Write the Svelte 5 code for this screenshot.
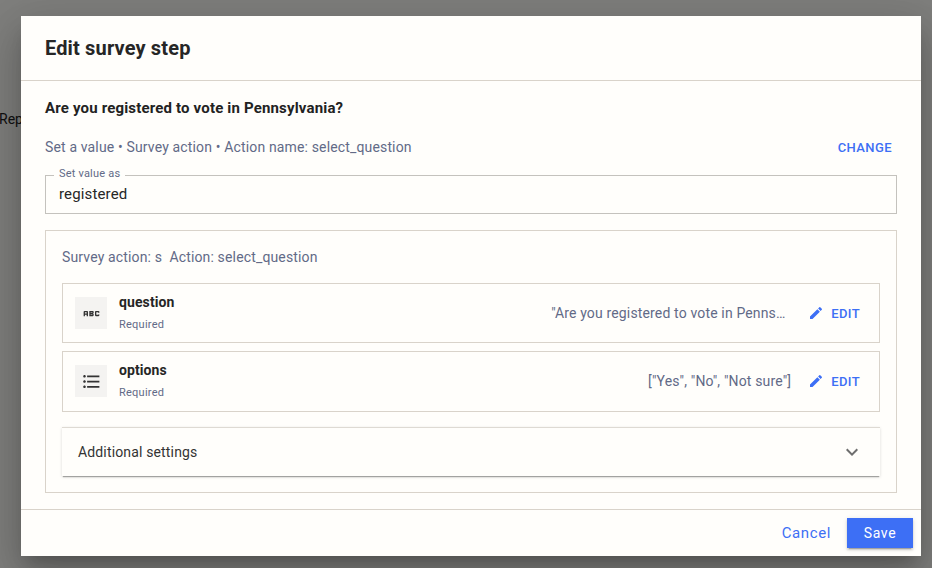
<script>
	let value = $state('registered');

	const params = [
		{ name: 'question', icon: 'abc', preview: '"Are you registered to vote in Pennsylvania?"' },
		{ name: 'options', icon: 'list', preview: '["Yes", "No", "Not sure"]' }
	];
</script>

<div class="page">
	<p class="behind">Rep</p>

	<div class="backdrop">
		<div class="dialog">
			<h2 class="title">Edit survey step</h2>

			<div class="content">
				<p class="question">Are you registered to vote in Pennsylvania?</p>

				<div class="meta-row">
					<span class="meta">Set a value • Survey action • Action name: select_question</span>
					<button class="text-btn change">CHANGE</button>
				</div>

				<fieldset class="field">
					<legend>Set value as</legend>
					<input bind:value />
				</fieldset>

				<div class="action-box">
					<div class="action-label">Survey action: s&nbsp;&nbsp;Action: select_question</div>

					{#each params as p}
						<div class="param {p.icon}">
							<div class="thumb">
								{#if p.icon === 'abc'}
									<svg width="21" height="21" viewBox="0 0 24 24" fill="#333">
										<path d="M21 11h-1.500v-.5h-2v3h2V13H21v1c0 .55-.45 1-1 1h-3c-.55 0-1-.45-1-1v-4c0-.55.45-1 1-1h3c.55 0 1 .45 1 1v1zM8 10v5H6.500v-1.500h-2V15H3v-5c0-.55.45-1 1-1h3c.55 0 1 .45 1 1zm-1.500.5h-2V12h2v-1.500zm7 1.500c.55 0 1 .45 1 1v1c0 .55-.45 1-1 1h-4V9h4c.55 0 1 .45 1 1v1c0 .55-.45 1-1 1zM11 10.500v.75h2v-.75h-2zm2 2.250h-2v.75h2v-.75z" />
									</svg>
								{:else}
									<svg width="21" height="21" viewBox="0 0 24 24" fill="#333">
										<path d="M4 10.500c-.83 0-1.500.67-1.500 1.500s.67 1.500 1.500 1.500 1.500-.67 1.500-1.500-.67-1.500-1.500-1.500zm0-6c-.83 0-1.500.67-1.500 1.500S3.170 7.500 4 7.500 5.500 6.830 5.500 6 4.830 4.500 4 4.500zm0 12c-.83 0-1.500.68-1.500 1.500s.68 1.500 1.500 1.500 1.500-.68 1.500-1.500-.67-1.500-1.500-1.500zM7 19h14v-2H7v2zm0-6h14v-2H7v2zm0-8v2h14V5H7z" />
									</svg>
								{/if}
							</div>
							<div class="param-text">
								<div class="param-name">{p.name}</div>
								<div class="param-req">Required</div>
							</div>
							<div class="preview">{p.preview}</div>
							<button class="text-btn edit">
								<svg width="16" height="16" viewBox="0 0 24 24" fill="#3d6ff5">
									<path d="M3 17.250V21h3.750L17.810 9.940l-3.750-3.750L3 17.250zM20.710 7.040a1 1 0 0 0 0-1.410l-2.340-2.340a1 1 0 0 0-1.410 0l-1.830 1.830 3.750 3.750 1.830-1.830z" />
								</svg>
								EDIT
							</button>
						</div>
					{/each}

					<div class="accordion">
						<span>Additional settings</span>
						<svg width="24" height="24" viewBox="0 0 24 24" fill="#6e6e6e">
							<path d="M16.590 8.590 12 13.170 7.410 8.590 6 10l6 6 6-6z" />
						</svg>
					</div>
				</div>
			</div>

			<div class="actions">
				<button class="text-btn cancel">Cancel</button>
				<button class="save">Save</button>
			</div>
		</div>
	</div>
</div>

<style>
	:global(body) {
		margin: 0;
		background: #fffefb;
	}

	.page {
		width: 932px;
		height: 568px;
		overflow: hidden;
		position: relative;
		font-family: Roboto, sans-serif;
		color: #222;
	}

	.behind {
		margin: 0;
		padding-top: 110px;
		font-size: 14px;
		line-height: 18px;
		margin-left: -1px;
	}

	.backdrop {
		position: absolute;
		inset: 0;
		background: rgba(0, 0, 0, 0.5);
		display: flex;
		padding: 16px 0 0 21px;
	}

	.dialog {
		width: 900px;
		height: 540px;
		background: #fffefb;
		display: flex;
		flex-direction: column;
		box-shadow: 0 11px 15px -7px rgba(0, 0, 0, 0.2), 0 24px 38px 3px rgba(0, 0, 0, 0.14), 0 9px 46px 8px rgba(0, 0, 0, 0.12);
	}

	.title {
		margin: 0;
		height: 65px;
		box-sizing: border-box;
		padding: 19px 24px 0 24px;
		font-size: 20px;
		line-height: 26px;
		font-weight: 700;
		letter-spacing: 0.15px;
		color: #262626;
		border-bottom: 1px solid #d9d3ca;
		flex: none;
	}

	.content {
		flex: 1;
		padding: 18px 24px 0 24px;
		min-height: 0;
	}

	.question {
		margin: 0;
		font-size: 15px;
		line-height: 18px;
		font-weight: 700;
		letter-spacing: 0.17px;
		color: #222;
	}

	.meta-row {
		display: flex;
		justify-content: space-between;
		align-items: center;
		margin-top: 21px;
		height: 18px;
		padding-right: 5px;
	}

	.meta,
	.action-label {
		font-size: 14px;
		line-height: 18px;
		letter-spacing: 0.15px;
		color: #626a87;
	}

	.text-btn {
		background: none;
		border: 0;
		padding: 0;
		font-family: inherit;
		color: #3d6ff5;
		cursor: pointer;
	}

	.change,
	.edit {
		font-size: 13px;
		font-weight: 500;
		letter-spacing: 0.4px;
	}

	.field {
		margin: 12px 0 0;
		padding: 0 13px;
		height: 46px;
		box-sizing: border-box;
		border: 1px solid #c4c2bd;
		min-inline-size: 0;
	}

	.field legend {
		padding: 0 5px 4px;
		margin-left: -5px;
		font-size: 11px;
		line-height: 11px;
		letter-spacing: 0.2px;
		color: #626a87;
	}

	.field input {
		display: block;
		width: 100%;
		border: 0;
		outline: 0;
		padding: 0;
		margin-top: 0;
		background: none;
		font: inherit;
		font-size: 15px;
		line-height: 22px;
		letter-spacing: 0.15px;
		color: #262626;
	}

	.action-box {
		margin-top: 16px;
		height: 263px;
		box-sizing: border-box;
		border: 1px solid #d9d3ca;
		padding: 17px 16px 0;
	}

	.param {
		display: flex;
		align-items: center;
		border: 1px solid #d9d3ca;
		box-sizing: border-box;
		height: 60px;
		margin-top: 8px;
		padding: 0 19px 0 12px;
	}

	.action-label + .param {
		margin-top: 17px;
	}

	.param.list {
		height: 61px;
		padding-bottom: 1px;
	}

	.thumb {
		width: 32px;
		height: 32px;
		background: #f4f3f1;
		display: flex;
		align-items: center;
		justify-content: center;
		flex: none;
	}

	.param-text {
		margin-left: 12px;
		flex: none;
		margin-top: 0;
	}

	.param-name {
		font-size: 14px;
		line-height: 18px;
		font-weight: 700;
		letter-spacing: 0.1px;
		color: #262626;
		margin-top: -1px;
	}

	.param-req {
		font-size: 11px;
		line-height: 14px;
		margin-top: 7px;
		letter-spacing: 0.25px;
		color: #626a87;
	}

	.preview {
		width: 240px;
		flex: none;
		margin-left: auto;
		text-align: right;
		white-space: nowrap;
		overflow: hidden;
		text-overflow: ellipsis;
		font-size: 14px;
		letter-spacing: 0.15px;
		color: #626a87;
	}

	.edit {
		display: flex;
		align-items: center;
		gap: 7px;
		margin-left: 17px;
		flex: none;
	}

	.accordion {
		display: flex;
		align-items: center;
		justify-content: space-between;
		margin-top: 15px;
		height: 49px;
		box-sizing: border-box;
		padding: 0 16px;
		font-size: 14px;
		letter-spacing: 0.15px;
		color: #333;
		border-top: 1px solid #dedad3;
		box-shadow: 0 2px 1px -1px rgba(0, 0, 0, 0.3), 0 1px 3px rgba(0, 0, 0, 0.14);
	}

	.actions {
		flex: none;
		height: 47px;
		box-sizing: border-box;
		border-top: 1px solid #d9d3ca;
		display: flex;
		align-items: center;
		justify-content: flex-end;
		padding: 0 8px 0 0;
		gap: 16px;
	}

	.cancel {
		font-size: 15px;
		letter-spacing: 0.6px;
	}

	.save {
		width: 66px;
		height: 30px;
		border: 0;
		background: #3d6ff5;
		color: #fff;
		font-family: inherit;
		font-size: 14px;
		letter-spacing: 0.6px;
		box-shadow: 0 3px 1px -2px rgba(0, 0, 0, 0.2), 0 2px 2px 0 rgba(0, 0, 0, 0.14), 0 1px 5px 0 rgba(0, 0, 0, 0.12);
		cursor: pointer;
	}
</style>
